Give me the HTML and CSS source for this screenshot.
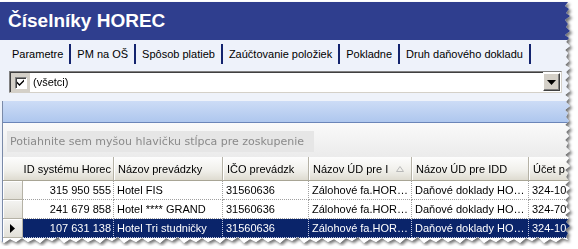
FILE: index.html
```html
<!DOCTYPE html>
<html lang="sk">
<head>
<meta charset="utf-8">
<title>Číselníky HOREC</title>
<link rel="stylesheet" href="styles.css">
</head>
<body>
<div class="shadow">
  <div class="window">
    <div class="title">Číselníky HOREC</div>
    <div class="tabs">
      <div class="tab active">Parametre</div>
      <div class="tab">PM na OŠ</div>
      <div class="tab">Spôsob platieb</div>
      <div class="tab">Zaúčtovanie položiek</div>
      <div class="tab">Pokladne</div>
      <div class="tab">Druh daňového dokladu</div>
    </div>
    <div class="filter">
      <div class="combo">
        <div class="checkwell">
          <span class="checkbox"><svg width="9" height="9" viewBox="0 0 9 9"><path d="M1 3.5 L3.5 6 L8 1.5 L8 3.5 L3.5 8 L1 5.5 Z" fill="#000"/></svg></span>
        </div>
        <div class="combotext">(všetci)</div>
        <div class="dropbtn"><svg width="9" height="5" viewBox="0 0 9 5"><path d="M0 0 H9 L4.5 5 Z" fill="#000"/></svg></div>
      </div>
    </div>
    <div class="grid">
      <div class="band"></div>
      <div class="groupzone">
        <div class="groupbox">Potiahnite sem myšou hlavičku stĺpca pre zoskupenie</div>
      </div>
      <div class="table">
        <div class="hcell span2">ID systému Horec</div>
        <div class="hcell">Názov prevádzky</div>
        <div class="hcell">IČO prevádzk</div>
        <div class="hcell sorted"><span class="htext">Názov ÚD pre I</span><svg class="sort" width="8" height="6" viewBox="0 0 8 6"><path d="M0.5 5.5 H7.5 L4 0.5 Z" fill="none" stroke="#b8b8b8"/></svg></div>
        <div class="hcell">Názov ÚD pre IDD</div>
        <div class="hcell">Účet p</div>

        <div class="sel"></div>
        <div class="cell right">315 950 555</div>
        <div class="cell">Hotel FIS</div>
        <div class="cell">31560636</div>
        <div class="cell">Zálohové fa.HOR…</div>
        <div class="cell">Daňové doklady HO…</div>
        <div class="cell">324-10</div>

        <div class="sel"></div>
        <div class="cell right">241 679 858</div>
        <div class="cell">Hotel **** GRAND</div>
        <div class="cell">31560636</div>
        <div class="cell">Zálohové fa.HOR…</div>
        <div class="cell">Daňové doklady HO…</div>
        <div class="cell">324-70</div>

        <div class="sel current"><svg width="5" height="9" viewBox="0 0 5 9"><path d="M0 0 L5 4.5 L0 9 Z" fill="#000"/></svg></div>
        <div class="cell right selected">107 631 138</div>
        <div class="cell selected">Hotel Tri studničky</div>
        <div class="cell selected">31560636</div>
        <div class="cell selected">Zálohové fa.HOR…</div>
        <div class="cell selected">Daňové doklady HO…</div>
        <div class="cell selected">324-10</div>
      </div>
    </div>
  </div>
</div>
</body>
</html>
```

FILE: styles.css
```css
html, body {
  margin: 0;
  padding: 0;
  background: #ffffff;
}

body {
  font-family: "Liberation Sans", Arial, sans-serif;
  font-size: 11px;
  color: #000;
}

.shadow {
  width: 578px;
  padding-top: 2px;
  filter: drop-shadow(2px 2px 1.5px rgba(0, 0, 0, 0.55));
}

.window {
  width: 572px;
  height: 244px;
  background: #eef2fa;
  display: flex;
  flex-direction: column;
  overflow: hidden;
  clip-path: polygon(0 0, 568px 0,
    565px 4px, 569px 7px, 566px 11px, 570px 14px, 565px 18px, 568px 22px, 566px 25px, 570px 29px,
    565px 33px, 569px 36px, 566px 40px, 570px 44px, 565px 48px, 568px 51px, 566px 55px, 569px 59px,
    565px 63px, 570px 66px, 566px 70px, 569px 74px, 565px 78px, 568px 81px, 566px 85px, 570px 89px,
    565px 93px, 569px 96px, 566px 100px, 570px 104px, 565px 108px, 568px 111px, 566px 115px, 569px 119px,
    565px 123px, 570px 126px, 566px 130px, 569px 134px, 565px 138px, 568px 141px, 566px 145px, 570px 149px,
    565px 153px, 569px 156px, 566px 160px, 570px 164px, 565px 168px, 568px 171px, 566px 175px, 569px 179px,
    565px 183px, 570px 186px, 566px 190px, 569px 194px, 565px 198px, 568px 201px, 566px 205px, 570px 209px,
    565px 213px, 569px 216px, 566px 220px, 570px 224px, 565px 228px, 568px 231px, 566px 235px, 568px 238px,
    562px 236px, 556px 240px, 550px 237px, 544px 241px, 538px 235px, 532px 239px, 526px 236px, 520px 241px, 514px 237px, 508px 240px,
    502px 236px, 496px 240px, 490px 237px, 484px 241px, 478px 235px, 472px 239px, 466px 236px, 460px 241px, 454px 237px, 448px 240px,
    442px 236px, 436px 240px, 430px 237px, 424px 241px, 418px 235px, 412px 239px, 406px 236px, 400px 241px, 394px 237px, 388px 240px,
    382px 236px, 376px 240px, 370px 237px, 364px 241px, 358px 235px, 352px 239px, 346px 236px, 340px 241px, 334px 237px, 328px 240px,
    322px 236px, 316px 240px, 310px 237px, 304px 241px, 298px 235px, 292px 239px, 286px 236px, 280px 241px, 274px 237px, 268px 240px,
    262px 236px, 256px 240px, 250px 237px, 244px 241px, 238px 235px, 232px 239px, 226px 236px, 220px 241px, 214px 237px, 208px 240px,
    202px 236px, 196px 240px, 190px 237px, 184px 241px, 178px 235px, 172px 239px, 166px 236px, 160px 241px, 154px 237px, 148px 240px,
    142px 236px, 136px 240px, 130px 237px, 124px 241px, 118px 235px, 112px 239px, 106px 236px, 100px 241px, 94px 237px, 88px 240px,
    82px 236px, 76px 240px, 70px 237px, 64px 241px, 58px 235px, 52px 239px, 46px 236px, 40px 241px, 34px 237px, 28px 240px,
    22px 236px, 16px 240px, 10px 237px, 4px 241px, 0 238px);
}

.title {
  height: 38px;
  flex: none;
  background: #2f3e8e;
  color: #ffffff;
  font-weight: bold;
  font-size: 19px;
  line-height: 38px;
  padding-left: 8px;
  box-sizing: border-box;
}

.tabs {
  height: 27px;
  flex: none;
  display: flex;
  align-items: flex-start;
  padding: 4px 0 0 5px;
  box-sizing: border-box;
  background: #eef2fa;
}

.tab {
  line-height: 20px;
  height: 20px;
  padding: 0 6px 0 7px;
  border-right: 2px solid #14246e;
  white-space: nowrap;
}

.tab + .tab {
  padding-left: 6px;
}

.filter {
  flex: none;
  padding: 4px 10px 8px 9px;
  background: #eef2fa;
}

.combo {
  height: 22px;
  box-sizing: border-box;
  border-top: 1px solid #808080;
  border-left: 1px solid #808080;
  border-bottom: 1px solid #d4d0c8;
  border-right: 1px solid #d4d0c8;
  background: #ffffff;
  display: flex;
  align-items: stretch;
}

.checkwell {
  width: 19px;
  background: #d4d0c8;
  display: flex;
  align-items: center;
  justify-content: center;
  border-top: 1px solid #404040;
  border-left: 1px solid #404040;
}

.checkbox {
  width: 12px;
  height: 12px;
  box-sizing: border-box;
  background: #ffffff;
  border-top: 1px solid #808080;
  border-left: 1px solid #808080;
  border-right: 1px solid #ffffff;
  border-bottom: 1px solid #ffffff;
  box-shadow: inset 1px 1px 0 #404040;
  display: flex;
  align-items: center;
  justify-content: center;
}

.combotext {
  flex: 1;
  padding-left: 3px;
  line-height: 19px;
  border-top: 1px solid #404040;
}

.dropbtn {
  width: 17px;
  margin: 1px 1px 1px 0;
  box-sizing: border-box;
  background: #d4d0c8;
  border-top: 1px solid #ffffff;
  border-left: 1px solid #ffffff;
  border-right: 1px solid #404040;
  border-bottom: 1px solid #404040;
  box-shadow: inset -1px -1px 0 #808080;
  display: flex;
  align-items: center;
  justify-content: center;
}

.grid {
  flex: 1;
  margin-left: 2px;
  border-left: 1px solid #7a8aa8;
  background: #ffffff;
  display: flex;
  flex-direction: column;
}

.band {
  height: 21px;
  flex: none;
  background: linear-gradient(#cddcf6, #aec7ee);
  border-bottom: 1px solid #6b85b8;
}

.groupzone {
  height: 34px;
  flex: none;
  box-sizing: border-box;
  padding: 8px 0 5px 4px;
  background: linear-gradient(#fafafa, #ebebeb);
}

.groupbox {
  width: 307px;
  height: 21px;
  box-sizing: border-box;
  background: #e6e6e6;
  color: #8a8a8a;
  font-family: "DejaVu Sans", Verdana, sans-serif;
  font-size: 11px;
  line-height: 21px;
  padding-left: 3px;
  white-space: nowrap;
  overflow: hidden;
}

.table {
  display: grid;
  grid-template-columns: 20px 91px 109px 86px 103px 117px 100px;
  grid-template-rows: 24px;
  grid-auto-rows: 19px;
}

.hcell {
  grid-row: 1;
  height: 24px;
  box-sizing: border-box;
  background: linear-gradient(#fdfdfd, #f0efea 60%, #dedbd0);
  border-right: 1px solid #b5b2a6;
  border-bottom: 1px solid #a8a595;
  box-shadow: inset 1px 0 0 #ffffff;
  padding-left: 4px;
  white-space: nowrap;
  overflow: hidden;
  display: flex;
  align-items: center;
}

.hcell.span2 {
  grid-column: span 2;
  justify-content: flex-end;
  padding-right: 2px;
}

.hcell.sorted {
  justify-content: space-between;
  padding-right: 7px;
}

.htext {
  overflow: hidden;
}

.sort {
  flex: none;
}

.sel {
  box-sizing: border-box;
  background: linear-gradient(#f4f4f2, #e2e0d8);
  border-right: 1px solid #b5b2a6;
  border-bottom: 1px solid #b5b2a6;
  box-shadow: inset 1px 1px 0 #ffffff;
  display: flex;
  align-items: center;
  justify-content: center;
}

.cell {
  box-sizing: border-box;
  border-right: 1px dotted #a0a0a0;
  border-bottom: 1px dotted #a0a0a0;
  line-height: 18px;
  padding-left: 3px;
  white-space: nowrap;
  overflow: hidden;
}

.cell.right {
  text-align: right;
  padding-right: 2px;
  padding-left: 0;
}

.cell.selected {
  background: #0a246a;
  color: #ffffff;
  border-right: 1px dotted #c0c8e0;
  border-bottom: 1px dotted #c0c8e0;
}
```
